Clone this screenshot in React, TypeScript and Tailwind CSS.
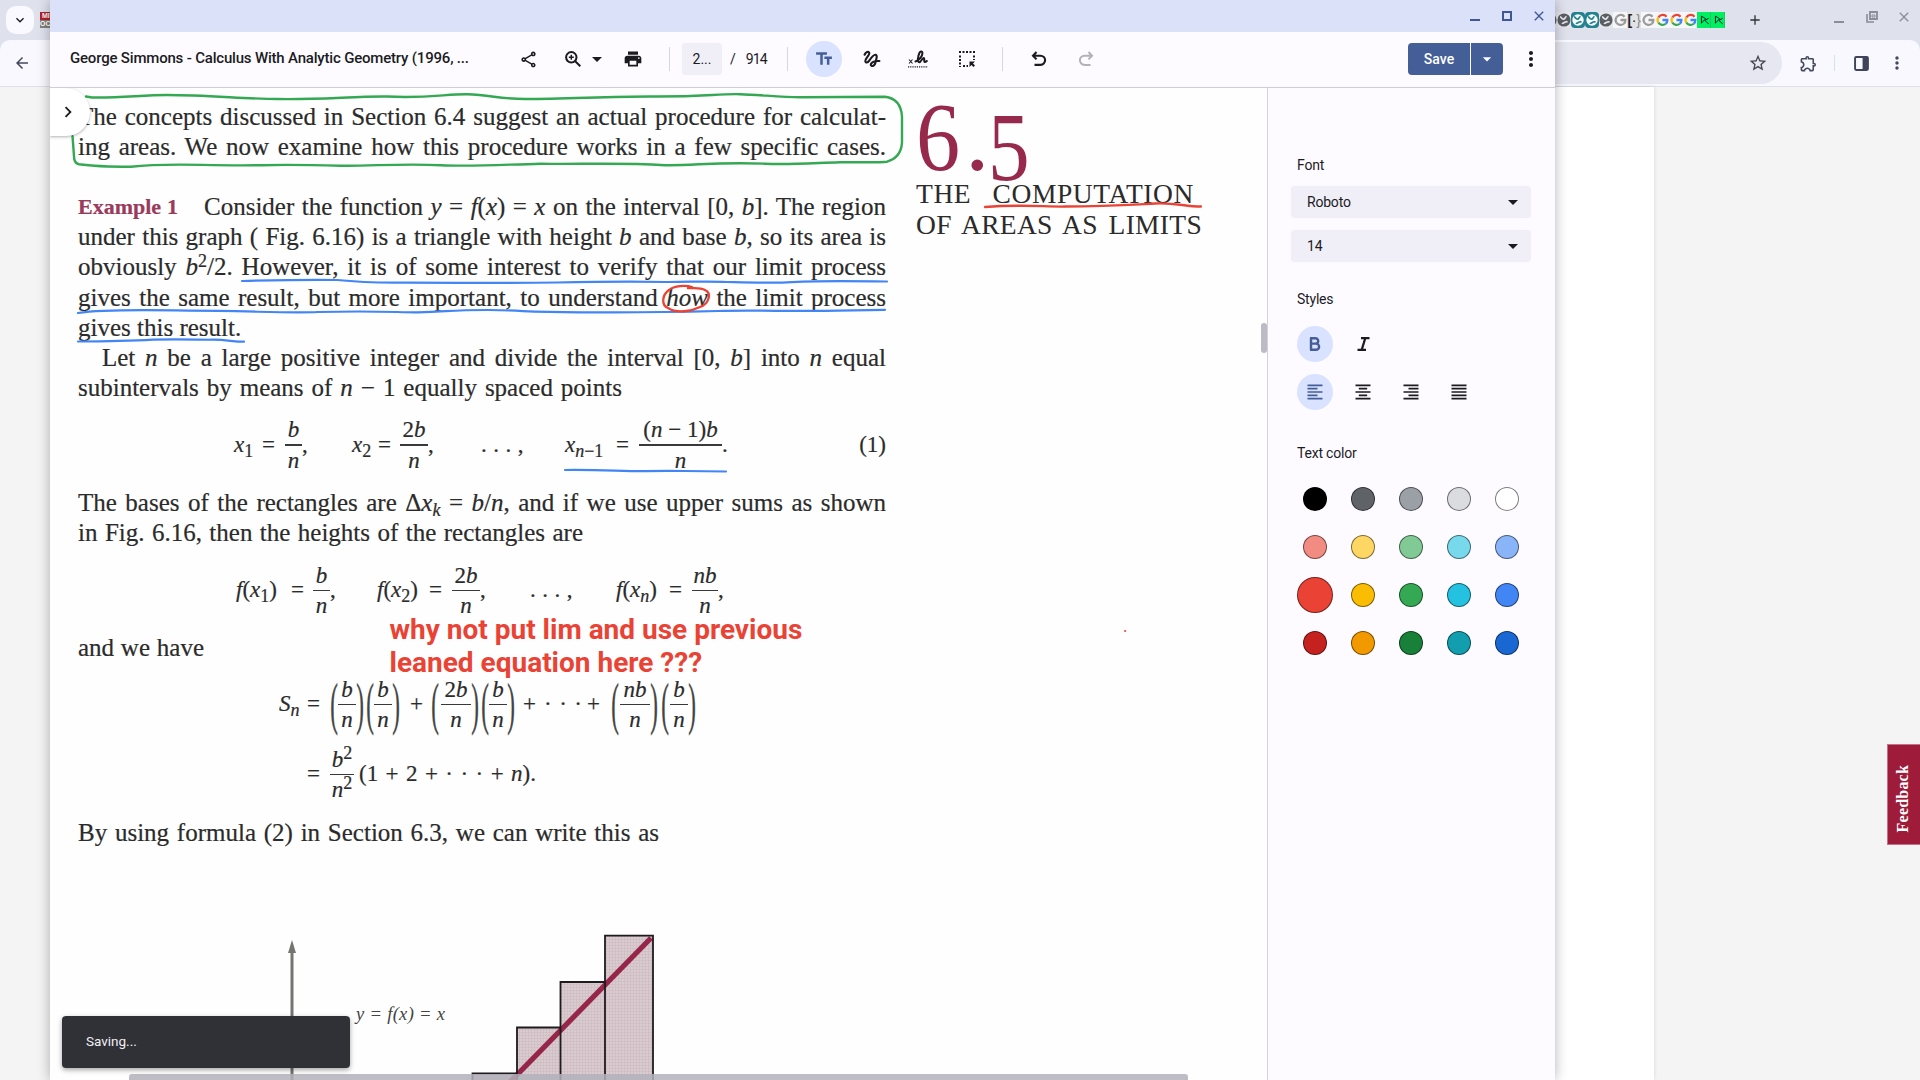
import React from "react";
import {
  MdOutlineShare,
  MdArrowDropDown,
  MdPrint,
  MdTextFields,
  MdMoreVert,
  MdChevronRight,
  MdArrowBack,
  MdKeyboardArrowDown,
  MdStarBorder,
  MdOutlineExtension,
  MdFormatAlignLeft,
  MdFormatAlignCenter,
  MdFormatAlignRight,
  MdFormatAlignJustify,
  MdClose,
  MdAdd,
} from "react-icons/md";

type Kids = { children?: React.ReactNode; className?: string };

/* ---------- Browser behind the editor window ---------- */

const Globe = ({ teal = false }: { teal?: boolean }) => (
  <span className={`flex h-4 w-[14px] shrink-0 items-center justify-center overflow-hidden ${teal ? "rounded bg-[#23808f]" : "bg-[#e6e7ec]"}`}>
    <svg viewBox="0 0 16 16" className="h-4 w-[14px] shrink-0">
      <circle cx="8" cy="8" r={teal ? 6.5 : 7.5} fill={teal ? "#f4fbfb" : "#5b5f65"} />
      <path
        d="M3.500 4.500c1.500 0 1.500 2.500 4 2.500 2 0 1-2.500 3.500-3M6 12.500c.5-1.500 2-1 3-2s2 0 3-1"
        stroke={teal ? "#23808f" : "#e6e7ec"}
        strokeWidth="2"
        fill="none"
      />
    </svg>
  </span>
);

const GoogleG = ({ gray = false }: { gray?: boolean }) => (
  <span className="flex h-4 w-[14px] shrink-0 items-center justify-center bg-[#f7f7fa]">
    <svg viewBox="0 0 16 16" className="h-[14px] w-[13px]" fill="none" strokeWidth="2.8">
      <path d="M13 4A6 6 0 0 0 3 4.7" stroke={gray ? "#9a9a9a" : "#ea4335"} />
      <path d="M3 4.7A6 6 0 0 0 3 11.3" stroke={gray ? "#9a9a9a" : "#fbbc05"} />
      <path d="M3 11.3A6 6 0 0 0 12 12.6" stroke={gray ? "#9a9a9a" : "#34a853"} />
      <path d="M12 12.6A6 6 0 0 0 14 8H8" stroke={gray ? "#9a9a9a" : "#4285f4"} />
    </svg>
  </span>
);

const GreenTab = () => (
  <span className="flex h-4 w-[14px] shrink-0 items-center justify-center border-r border-[#1cc95f] bg-[#03ef62]">
    <svg viewBox="0 0 14 16" className="h-4 w-3" fill="none" stroke="#05192d" strokeWidth="1.100">
      <path d="M4 12V3.500l5 3-5 5M12.500 6L8 8.500l4.500 4" />
    </svg>
  </span>
);

const Browser = () => (
  <div className="flex h-full w-full flex-col">
    <div className="flex h-10 items-start justify-between bg-[#dfe1ed]">
      <div className="flex items-center pt-[6px] pl-[6px]">
        <span className="flex h-7 w-7 items-center justify-center rounded-[10px] bg-[#faf9ff] text-[#1b1b1f]">
          <MdKeyboardArrowDown className="h-4 w-4" />
        </span>
        <span className="ml-[6px] flex h-4 w-4 flex-col overflow-hidden text-center font-['Liberation_Sans'] text-[7px] leading-[8px] font-bold text-white">
          <span className="bg-[#b3202c]">MIT</span>
          <span className="bg-[#857f77]">OCW</span>
        </span>
      </div>
      <div className="flex h-10 items-center">
        <div className="flex">
          <Globe />
          <Globe />
          <Globe teal />
          <Globe teal />
          <Globe />
          <GoogleG gray />
          <span className="flex h-4 w-[14px] items-center justify-center overflow-hidden bg-[#e3e3e6] font-['Liberation_Sans'] text-[14px] leading-4 tracking-tight text-[#222]">
            <b>[</b>·<span className="text-[#888]">{"}"}</span>
          </span>
          <GoogleG gray />
          <GoogleG />
          <GoogleG />
          <GoogleG />
          <GreenTab />
          <GreenTab />
        </div>
        <MdAdd className="ml-[22px] h-4 w-4 text-[#303134]" />
        <span className="mt-[4px] ml-[71px] h-[2px] w-[10px] bg-[#8b8d98]" />
        <svg viewBox="0 0 12 12" className="mb-[6px] ml-[22px] h-3 w-3" fill="none" stroke="#8b8d98" strokeWidth="2">
          <path d="M4 1h7v7H4z" strokeWidth="1.8" />
          <path d="M1 3v8h7" strokeWidth="1.6" />
          <path d="M6 4h3v2H6z" strokeWidth="1" />
        </svg>
        <MdClose className="mr-[8px] mb-[6px] ml-[18px] h-4 w-4 text-[#8b8d98]" />
      </div>
    </div>
    <div className="h-[47px] bg-[#dfe1ed]">
      <div className="flex h-full items-center rounded-t-[10px] border-b border-[#dddfec] bg-[#f9f8ff] pl-[13px]">
        <MdArrowBack className="h-[18px] w-[18px] text-[#44485c]" />
        <div className="ml-[200px] flex h-[42px] w-[1551px] items-center justify-end rounded-full bg-[#e6e7f1] pr-[14px]">
          <MdStarBorder className="h-5 w-5 text-[#44464f]" />
        </div>
        <MdOutlineExtension className="ml-[17px] h-[19px] w-[19px] text-[#44485c]" />
        <span className="ml-[16px] h-4 w-px bg-[#d3e0fb]" />
        <svg viewBox="0 0 14 14" className="ml-[19px] h-[15px] w-[15px]">
          <rect x="1" y="1" width="12" height="12" rx="1" fill="none" stroke="#40445a" strokeWidth="1.8" />
          <path d="M8 1h5v12H8z" fill="#40445a" />
        </svg>
        <MdMoreVert className="ml-[18px] h-5 w-5 text-[#44485c]" />
      </div>
    </div>
    <div className="flex flex-1 justify-center bg-[#f4f4f4]">
      <div className="w-[1388px] bg-white shadow-[0_0_4px_rgba(0,0,0,0.12)]" />
    </div>
  </div>
);

/* ---------- Toolbar ---------- */

const Sep = ({ className = "" }: Kids) => <span className={`h-6 w-px bg-[#d8d7de] ${className}`} />;

const TitleBar = () => (
  <div className="flex h-8 shrink-0 items-center justify-end bg-[#dce1fa] pr-[8px] text-[#3f5792]">
    <span className="mt-[7px] h-[2px] w-[10px] bg-[#3f5792]" />
    <span className="ml-[22px] h-[10px] w-[10px] border-2 border-[#3f5792]" />
    <MdClose className="ml-[19px] h-4 w-4" />
  </div>
);

const Toolbar = () => (
  <div className="flex h-[56px] shrink-0 items-center border-b border-[#cfced6] bg-[#fdfbff] pb-px font-[Roboto] text-[14px] text-[#1b1b1f]">
    <span className="ml-[20px] w-[446px] pb-px text-[15px] font-medium tracking-[-0.190px] whitespace-nowrap">
      George Simmons - Calculus With Analytic Geometry (1996, ...
    </span>
    <MdOutlineShare className="ml-[3px] h-[19px] w-[19px]" />
    <svg viewBox="0 0 16 16" className="ml-[27px] h-4 w-4" fill="none" stroke="#1b1b1f" strokeWidth="2">
      <circle cx="6.300" cy="6.300" r="5.200" />
      <path d="M10 10l5.300 5.300" />
      <path d="M6.300 3.800v5M3.800 6.300h5" strokeWidth="1.500" />
    </svg>
    <MdArrowDropDown className="ml-[4px] h-6 w-6" />
    <MdPrint className="ml-[14px] h-5 w-5" />
    <Sep className="ml-[26px]" />
    <span className="ml-[12px] flex h-8 w-10 items-center justify-center rounded bg-[#f0eff7]">2...</span>
    <span className="ml-[8px]">/</span>
    <span className="ml-[10px] tracking-[-0.900px]">914</span>
    <Sep className="ml-[20px]" />
    <span className="ml-[18px] flex h-9 w-9 items-center justify-center rounded-full bg-[#d9e2ff] text-[#455e98]">
      <MdTextFields className="h-5 w-5" />
    </span>
    <svg viewBox="0 0 17 17" className="ml-[21px] h-[18px] w-[18px]" fill="none" stroke="#1b1b1f" strokeWidth="2" strokeLinecap="round" strokeLinejoin="round">
      <path d="M1.500 4.500C2.500 2 5.500 .8 6 2.800c.4 2-4 5.500-3.800 7.700.2 2 2.300 1.500 3.500-.3C7.500 7.500 10 4 12 4.500c2.300.8.300 4 0 6.500-.3 2.500-2 4.500-3.700 4-1.800-.6-.8-3 1.700-4 2.200-.8 4-.5 5.500-.6" />
    </svg>
    <svg viewBox="0 0 20 18" className="ml-[27px] h-[18px] w-[20px]" fill="none" stroke="#1b1b1f">
      <path d="M1 9.500l3.500 4M4.500 9.500L1 13.500" strokeWidth="1.100" />
      <path d="M7.500 11.500c4-1.500 7.500-6 6.800-9.200-.3-1.400-2-1-2.800.5-1.500 3-2.500 9.500-.2 9.500 2 0 2.500-4.500 4.500-4.300 1.300.3-.5 3.800 1 4 .8 0 1.500-.5 2-1" strokeWidth="2" strokeLinecap="round" />
      <path d="M0 16.800h20" strokeWidth="1.200" strokeDasharray="1.200 1" />
    </svg>
    <svg viewBox="0 0 16 16" className="ml-[31px] h-4 w-4" fill="none" stroke="#1b1b1f">
      <path d="M0 1h16M1 4.500V16M15 4.500V9M4 15h5" strokeWidth="2" strokeDasharray="2 1.500" />
      <path d="M10.500 10.500H16l-2 2 2 2-1.500 1.500-2-2-2 2z" fill="#1b1b1f" stroke="none" />
    </svg>
    <Sep className="ml-[27px]" />
    <svg viewBox="0 0 16 16" className="ml-[28px] h-4 w-4" fill="none" stroke="#1b1b1f" strokeWidth="2.100">
      <path d="M5.500 1L2 4.700l3.500 3.700M2 4.700h7.500a4.600 4.600 0 0 1 0 9.200H3.500" />
    </svg>
    <svg viewBox="0 0 16 16" className="ml-[31px] h-4 w-4" fill="none" stroke="#b3b2b8" strokeWidth="2">
      <path d="M10.500 1L14 4.700l-3.500 3.700M14 4.700H6.500a4.600 4.600 0 0 0 0 9.200h6" />
    </svg>
    <div className="ml-auto flex h-8 items-stretch gap-px text-[14px] font-medium text-white">
      <span className="flex w-[62px] items-center justify-center rounded-l bg-[#445e98]">Save</span>
      <span className="flex w-[32px] items-center justify-center rounded-r bg-[#445e98]">
        <MdArrowDropDown className="h-5 w-5" />
      </span>
    </div>
    <MdMoreVert className="mr-[12px] ml-[16px] h-6 w-6" />
  </div>
);

/* ---------- Page content ---------- */

const Line = ({ children, className = "" }: Kids) => (
  <div className={`h-[30.2px] leading-[30.2px] whitespace-nowrap [text-align-last:justify] ${className}`}>{children}</div>
);

const Eq = ({ children, className = "" }: Kids) => (
  <div className={`flex h-[60px] items-center text-[23px] leading-[30px] whitespace-nowrap ${className}`}>{children}</div>
);

const Frac = ({ top, bottom, className = "" }: { top: React.ReactNode; bottom: React.ReactNode; className?: string }) => (
  <span className={`flex flex-col items-center italic ${className}`}>
    <span className="h-[28px] leading-[28px]">{top}</span>
    <span className="h-[1.5px] w-full bg-[#3a3a3a]" />
    <span className="h-[28px] leading-[29px]">{bottom}</span>
  </span>
);

const Sub = ({ children }: Kids) => <span className="relative top-[5px] text-[18px] leading-none">{children}</span>;
const Sup = ({ children }: Kids) => <span className="relative -top-[8px] text-[18px] leading-none not-italic">{children}</span>;
const Paren = ({ children, className = "" }: Kids) => (
  <span className={`flex w-[8px] scale-y-[2.500] justify-center leading-[21px] text-[#444] ${className}`}>{children}</span>
);
const Upright = ({ children }: Kids) => <span className="not-italic">{children}</span>;

const Annotations = () => (
  <svg className="pointer-events-none absolute top-0 left-0 h-[992px] w-[1217px]" viewBox="50 88 1217 992" fill="none" strokeLinecap="round" strokeLinejoin="round">
    <g stroke="#34a853" strokeWidth="2.400">
      <path d="M86 96.500l6 1c30 .5 50-2.500 75-2.500 40 0 80 4 110 4 40 1 80-3 110-2.500 40 2 60-2.500 80-2.200 25 1 35 5 60 4.700 40 0 90-3 130-2.500 50 0 60-2.800 83-2.300 20 .5 40 3 60 3l85-.5q16 2 17 20l0 26q-1 15-15 19c-8 1-27 .5-47 .5-30 1-50 2.500-75 1.500-50-2-70 2-100 1.500-50-3-90-.500-124-1.500-40 1-70 3-100 1.500-40-2-70 1-100 .5-40-1-60-1-80-.5-60 1-90-3-130 1.500-30 0-45-1.500-52-2.500q-5-1-5-8l-1.500-20" />
    </g>
    <g stroke="#4285f4" strokeWidth="2.200">
      <path d="M242 281c40-1 60-1.500 95-1 30 3 40 2.500 70 2.700 60 0 100 .5 150-.2 50-1 80-1 110-.5 30-.2 40-1 60 0 30 .8 40 1.200 60 .3 30-2 60-1.300 100-.8" />
      <path d="M78 313c20-3 60-3.300 110-2.300 60 0 100 2.800 130 1.300 60-1.500 80 .5 100 .3 30-.5 30-2.300 70-2.300 40 .5 30 1.500 60 1.800 60 1.200 120 .5 170-.8 30-1 80 .5 120-.3l47-.9" />
      <path d="M78 341.500c30 0 50-.3 75-1.800 30-.7 50 .3 60 0 15 .3 20 2 31 2" />
      <path d="M565 470c40-.3 50 1 80 1.200 30-1 30 0 81 .3" />
    </g>
    <g stroke="#ea4335" strokeWidth="2.300">
      <path d="M692 287c-6-2-18-1.500-23 3-7 5-8 15-1 18 9 6 24 3 32-1 9-3 12-14 5-17-5-3-12-1.500-17-2" />
      <path d="M985 207c40-3 60 0 80-.5 40 0 70-2 90-3 20-1 30 3 46 3" />
      <circle cx="1125" cy="631" r=".6" strokeWidth="1" />
    </g>
  </svg>
);

const Graph = () => (
  <svg className="block h-[150px] w-[760px]" viewBox="50 930 760 150">
    <defs>
      <pattern id="weave" width="3" height="3" patternUnits="userSpaceOnUse">
        <rect width="3" height="3" fill="#d9cbd0" />
        <path d="M0 .5h3M.5 0v3" stroke="#cdbdc3" strokeWidth=".7" />
      </pattern>
    </defs>
    <path d="M292 952v130" stroke="#757570" strokeWidth="3" />
    <path d="M292 940l4 13h-8z" fill="#757570" />
    <path d="M473 1080v-6.500h43.500V1027H560v-45h45v-46h48v144z" fill="url(#weave)" />
    <path d="M508 1084L651 938" stroke="#96254a" strokeWidth="5.200" />
    <path d="M472.500 1080v-6.500H517V1027.500h43.500V982H605v-46.300h48V1080M517 1073v10M560.500 1027v60M605 982v100" fill="none" stroke="#1d1b1d" strokeWidth="1.800" />
    <text x="356" y="1020" className="font-['Liberation_Serif'] italic" fontSize="18.500" fill="#444" textLength="89">
      y = f(x) = x
    </text>
  </svg>
);

const Page = () => (
  <div className="relative h-full w-[1217px] overflow-hidden bg-[#fefefe] font-['Liberation_Serif'] text-[25px] text-[#2b2b2b]">
    <div className="flex pt-[13.500px] pl-[28px]">
      <div className="w-[808px] shrink-0 [-webkit-text-stroke:0.200px]">
        <Line>The concepts discussed in Section 6.4 suggest an actual procedure for calculat-</Line>
        <Line>ing areas. We now examine how this procedure works in a few specific cases.</Line>
        <div className="flex pt-[30.200px]">
          <Line className="w-[100px] text-[22px] font-bold text-[#9a3a5c]">Example 1</Line>
          <Line className="ml-[26px] w-[682px]">
            Consider the function <i>y</i> = <i>f</i>(<i>x</i>) = <i>x</i> on the interval [0, <i>b</i>]. The region
          </Line>
        </div>
        <Line>
          under this graph ( Fig. 6.16) is a triangle with height <i>b</i> and base <i>b</i>, so its area is
        </Line>
        <Line>
          obviously <i>b</i>
          <Sup>2</Sup>/2. However, it is of some interest to verify that our limit process
        </Line>
        <Line>
          gives the same result, but more important, to understand <i>how</i> the limit process
        </Line>
        <Line className="w-[162px]">gives this result.</Line>
        <Line className="pl-[24px]">
          Let <i>n</i> be a large positive integer and divide the interval [0, <i>b</i>] into <i>n</i> equal
        </Line>
        <Line className="w-[544px]">
          subintervals by means of <i>n</i> − 1 equally spaced points
        </Line>

        <Eq className="mt-[11.500px] pl-[156px]">
          <span className="w-[28px]"><i>x</i><Sub>1</Sub></span>
          <span className="w-[23px]">=</span>
          <Frac className="w-[17px]" top="b" bottom="n" />
          <span className="w-[50px]">,</span>
          <span className="w-[26px]"><i>x</i><Sub>2</Sub></span>
          <span className="w-[22px]">=</span>
          <Frac className="w-[28px]" top={<><Upright>2</Upright>b</>} bottom="n" />
          <span className="w-[53px]">,</span>
          <span className="w-[84px] tracking-[6.500px]">...,</span>
          <span className="w-[51px]"><i>x</i><Sub><i>n</i>−1</Sub></span>
          <span className="w-[23px]">=</span>
          <Frac className="w-[83px]" top={<><Upright>(</Upright>n <Upright>− 1)</Upright>b</>} bottom="n" />
          <span className="w-[60px]">.</span>
          <span className="ml-auto">(1)</span>
        </Eq>

        <Line className="mt-[13px]">
          The bases of the rectangles are Δ<i>x<Sub>k</Sub></i> = <i>b</i>/<i>n</i>, and if we use upper sums as shown
        </Line>
        <Line className="w-[505px]">in Fig. 6.16, then the heights of the rectangles are</Line>

        <Eq className="mt-[12px] pl-[158px]">
          <span className="w-[55px]"><i>f</i>(<i>x</i><Sub>1</Sub>)</span>
          <span className="w-[22px]">=</span>
          <Frac className="w-[17px]" top="b" bottom="n" />
          <span className="w-[47px]">,</span>
          <span className="w-[52px]"><i>f</i>(<i>x</i><Sub>2</Sub>)</span>
          <span className="w-[23px]">=</span>
          <Frac className="w-[28px]" top={<><Upright>2</Upright>b</>} bottom="n" />
          <span className="w-[50px]">,</span>
          <span className="w-[86px] tracking-[6.500px]">...,</span>
          <span className="w-[53px]"><i>f</i>(<i>x<Sub>n</Sub></i>)</span>
          <span className="w-[23px]">=</span>
          <Frac className="w-[26px]" top="nb" bottom="n" />
          <span>,</span>
        </Eq>

        <Line className="mt-[12.500px] w-[126px]">and we have</Line>

        <Eq className="mt-[11.500px] pl-[201px]">
          <span className="w-[28px]"><i>S<Sub>n</Sub></i></span>
          <span className="w-[23px]">=</span>
          <Paren>(</Paren>
          <Frac className="w-[18px]" top="b" bottom="n" />
          <Paren>)</Paren>
          <Paren className="ml-[2px]">(</Paren>
          <Frac className="w-[18px]" top="b" bottom="n" />
          <Paren>)</Paren>
          <span className="ml-[10px] w-[21px]">+</span>
          <Paren>(</Paren>
          <Frac className="ml-[2px] w-[30px]" top={<><Upright>2</Upright>b</>} bottom="n" />
          <Paren>)</Paren>
          <Paren className="ml-[2px]">(</Paren>
          <Frac className="w-[18px]" top="b" bottom="n" />
          <Paren>)</Paren>
          <span className="ml-[8px] w-[21px]">+</span>
          <span className="w-[43px] tracking-[7.500px]">···</span>
          <span className="w-[24px]">+</span>
          <Paren>(</Paren>
          <Frac className="ml-px w-[30px]" top="nb" bottom="n" />
          <Paren>)</Paren>
          <Paren className="ml-[3px]">(</Paren>
          <Frac className="ml-px w-[18px]" top="b" bottom="n" />
          <Paren>)</Paren>
        </Eq>

        <Eq className="mt-[10px] pl-[229px]">
          <span className="w-[23px]">=</span>
          <Frac className="w-[24px]" top={<>b<Sup>2</Sup></>} bottom={<>n<Sup>2</Sup></>} />
          <span className="ml-[5px] w-[177px] [text-align-last:justify]">(1 + 2 + · · · + <i>n</i>).</span>
        </Eq>

        <Line className="mt-[13.500px] w-[581px]">By using formula (2) in Section 6.3, we can write this as</Line>
      </div>

      <div className="ml-[30px] flex w-[285px] flex-col text-[27.500px] text-[#2b2b2b]">
        <div className="-mt-[9px] flex h-[85px] items-start text-[98px] leading-[88px] text-[#96294c]">
          <span className="w-[49px] origin-left scale-x-[0.900]">6</span>
          <span className="w-[23px]">.</span>
          <span className="mt-[10px] origin-left scale-x-[0.850]">5</span>
        </div>
        <div className="h-[31px] w-[278px] leading-[31px] tracking-[0.600px] whitespace-nowrap [text-align-last:justify]">THE COMPUTATION</div>
        <div className="h-[31px] w-[286px] leading-[31px] tracking-[0.300px] whitespace-nowrap [text-align-last:justify]">OF AREAS AS LIMITS</div>
      </div>
    </div>

    <div className="absolute bottom-0 left-0">
      <Graph />
    </div>

    <Annotations />

    <div className="absolute top-[525px] left-[339.500px] font-[Roboto] text-[28px] leading-[33px] font-bold whitespace-nowrap text-[#ea4335]">
      <div>why not put lim and use previous</div>
      <div>leaned equation here ???</div>
    </div>

    <div className="absolute top-0 left-0 flex h-[48px] w-[40px] items-center rounded-r-full bg-white pl-[7px] text-[#1b1b1f] shadow-[0_1px_3px_rgba(0,0,0,0.3)]">
      <MdChevronRight className="h-[22px] w-[22px]" />
    </div>
    <div className="absolute right-0 bottom-0 h-[6px] w-full">
      <div className="ml-[79px] h-full w-[1059px] rounded-t-[3px] bg-[#b3b1bb]/85" />
    </div>
    <div className="absolute top-[235px] right-0 h-[30px] w-[6px] rounded-[3px] bg-[#bcbac4]" />
    <div className="absolute bottom-[12px] left-[12px] flex h-[52px] w-[288px] items-center rounded bg-[#303136] pb-px pl-6 font-[Roboto] text-[13.500px] text-[#f2f0f4] shadow-[0_2px_5px_rgba(0,0,0,0.35)]">
      Saving...
    </div>
  </div>
);

/* ---------- Text style panel ---------- */

const swatches = [
  "bg-[#000000]", "bg-[#5f6368]", "bg-[#9aa0a6]", "bg-[#dadce0]", "bg-[#ffffff]",
  "bg-[#f28b82]", "bg-[#fdd663]", "bg-[#81c995]", "bg-[#78d9ec]", "bg-[#8ab4f8]",
  "bg-[#ea4335]", "bg-[#fbbc04]", "bg-[#34a853]", "bg-[#24c1e0]", "bg-[#4285f4]",
  "bg-[#c5221f]", "bg-[#f29900]", "bg-[#188038]", "bg-[#129eaf]", "bg-[#1967d2]",
];

const Select = ({ children, className = "" }: Kids) => (
  <div className={`flex h-8 w-[240px] items-center justify-between rounded bg-[#f0eff7] pr-[6px] pl-4 ${className}`}>
    <span className="tracking-[-0.200px]">{children}</span>
    <MdArrowDropDown className="h-6 w-6" />
  </div>
);

const Round = ({ children, className = "" }: Kids) => (
  <span className={`flex h-9 w-9 items-center justify-center rounded-full ${className}`}>{children}</span>
);

const Panel = () => (
  <div className="flex flex-1 flex-col border-l border-[#d3d2da] bg-[#fdfbff] font-[Roboto] text-[14px] leading-5 text-[#1b1b1f]">
    <div className="mt-[67px] ml-[29px] tracking-[-0.200px]">Font</div>
    <Select className="mt-[11px] ml-[23px]">Roboto</Select>
    <Select className="mt-[12px] ml-[23px]">14</Select>
    <div className="mt-[27px] ml-[29px] tracking-[-0.200px]">Styles</div>
    <div className="mt-[17px] ml-[29px] flex gap-3">
      <Round className="bg-[#d9e2ff] text-[#455e98]">
        <svg viewBox="0 0 12 14" className="h-[14px] w-3" fill="none" stroke="currentColor" strokeWidth="2.400">
          <path d="M2 1.200v11.600M1 1.200h5.500a2.700 2.700 0 0 1 0 5.400H2M6.500 6.600H7a3.100 3.100 0 0 1 0 6.200H1" />
        </svg>
      </Round>
      <Round>
        <svg viewBox="0 0 13 14" className="h-[14px] w-[13px]" fill="none" stroke="currentColor" strokeWidth="2.200">
          <path d="M4 1.200h8.500M.5 12.800H9M8.300 1.200L4.700 12.800" />
        </svg>
      </Round>
    </div>
    <div className="mt-[12px] ml-[29px] flex gap-3">
      <Round className="bg-[#d9e2ff] text-[#455e98]"><MdFormatAlignLeft className="h-5 w-5" /></Round>
      <Round><MdFormatAlignCenter className="h-5 w-5" /></Round>
      <Round><MdFormatAlignRight className="h-5 w-5" /></Round>
      <Round><MdFormatAlignJustify className="h-5 w-5" /></Round>
    </div>
    <div className="mt-[33px] ml-[29px] tracking-[-0.200px]">Text color</div>
    <div className="mt-[12px] ml-[29px] grid w-[240px] grid-cols-5">
      {swatches.map((c, i) => (
        <div key={c} className="flex h-12 w-9 items-center justify-center">
          <span className={`shrink-0 rounded-full border border-black/50 ${i === 10 ? "h-9 w-9" : "h-6 w-6"} ${c}`} />
        </div>
      ))}
    </div>
  </div>
);

export default function App() {
  return (
    <div className="relative h-[1080px] w-[1920px] overflow-hidden">
      <Browser />
      <div className="absolute top-[744px] right-0 flex h-[101px] w-[33px] items-center justify-center border border-r-0 border-[#c4708a] bg-[#9e1b3a] pt-[8px] pr-[2px] text-white">
        <span className="rotate-180 font-['Liberation_Serif'] text-[16px] font-bold tracking-[0.200px] [writing-mode:vertical-rl]">Feedback</span>
      </div>
      <div className="absolute top-0 left-[50px] flex h-[1080px] w-[1505px] flex-col bg-[#fdfbff] shadow-[0_0_12px_rgba(0,0,0,0.3)]">
        <TitleBar />
        <Toolbar />
        <div className="flex min-h-0 flex-1">
          <Page />
          <Panel />
        </div>
      </div>
    </div>
  );
}
